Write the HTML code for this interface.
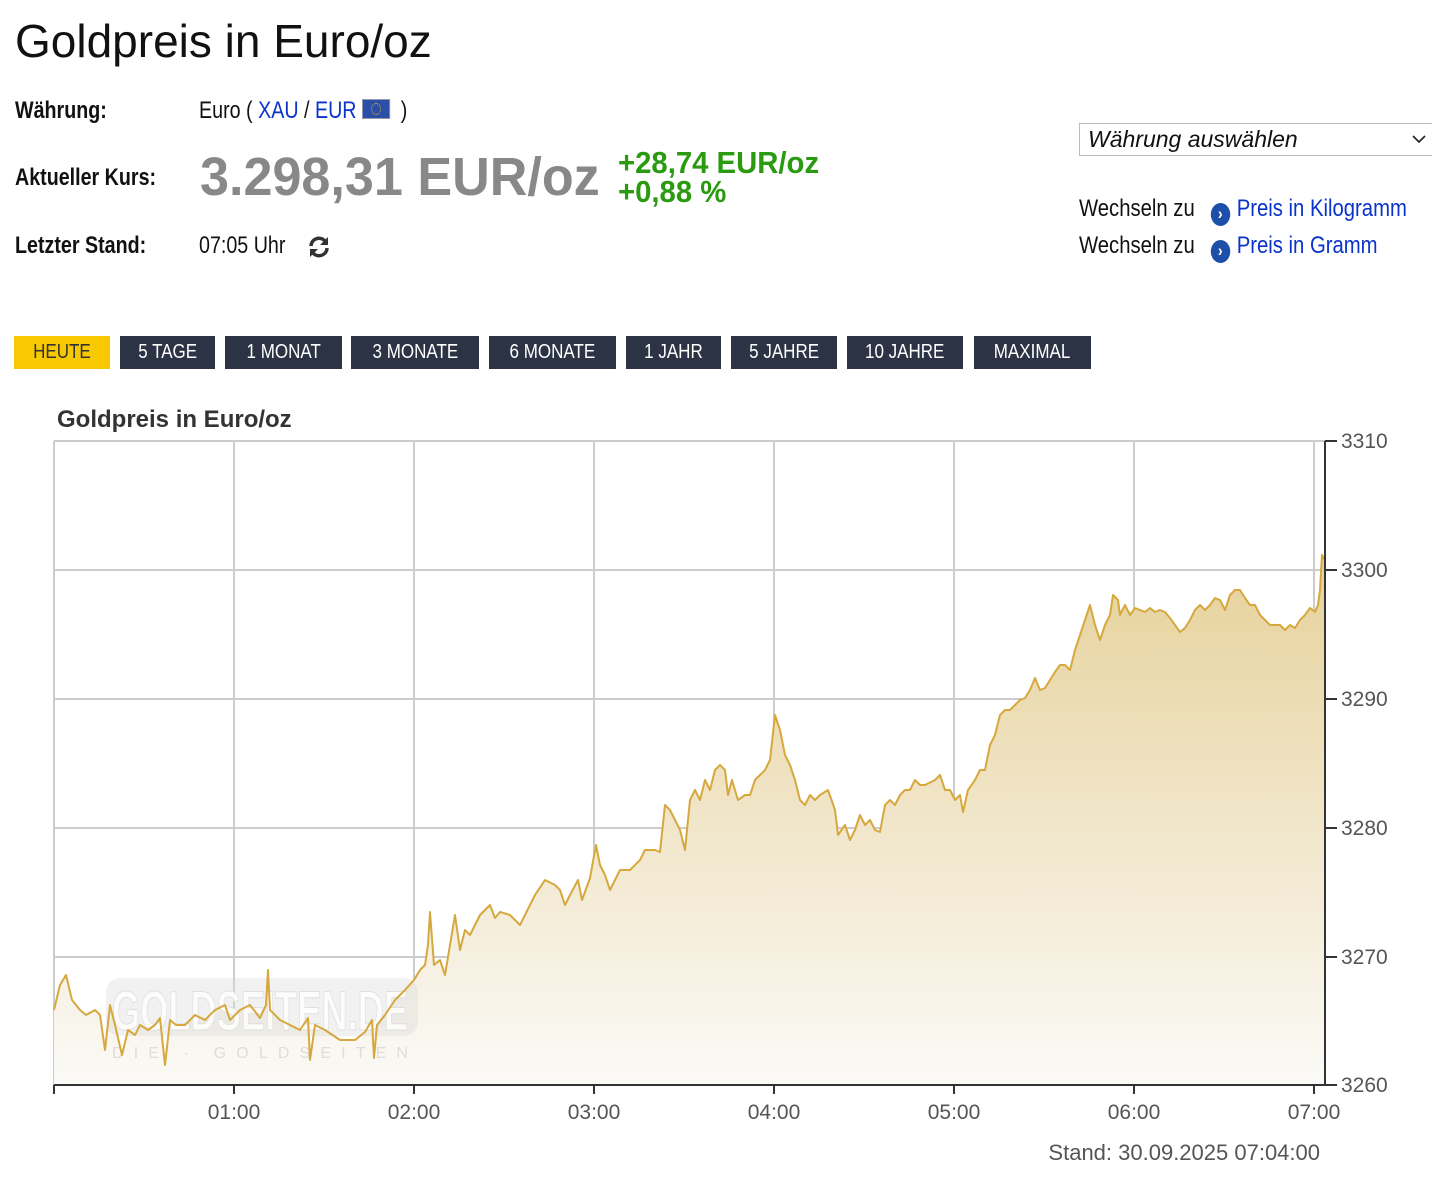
<!DOCTYPE html>
<html><head><meta charset="utf-8"><style>
body{margin:0;width:1432px;height:1200px;background:#fff;position:relative;overflow:hidden;font-family:"Liberation Sans",sans-serif;}
.a{position:absolute;white-space:nowrap}
.n{transform:scaleX(.82);transform-origin:0 0}
.l{font-size:24px;font-weight:bold;color:#111}
.v{font-size:24px;color:#111}
.b{color:#0a33cc}
.btn{position:absolute;top:336px;height:33px;line-height:33px;background:#2b3344;color:#fff;font-size:20px;text-align:center}
.btn span{display:inline-block;transform:scaleX(.85)}
.ic{display:inline-block;width:23px;height:23px;border-radius:50%;background:#1d4fa8;color:#fff;font-size:17px;line-height:22px;text-align:center;font-weight:bold;vertical-align:-3px;margin:0 8px 0 12px}
</style></head><body>
<div class="a" style="left:15px;top:14px;font-size:46px;color:#111">Goldpreis in Euro/oz</div>
<div class="a l n" style="left:15px;top:97px">Währung:</div>
<div class="a v n" style="left:199px;top:97px">Euro ( <span class="b">XAU</span> / <span class="b">EUR</span> <span style="display:inline-block;width:32px;height:18px;background:#2b4fa8;vertical-align:-1px;border:1px solid #99a;position:relative"><span style="position:absolute;left:10px;top:3px;width:10px;height:10px;border:1px dotted #e8c030;border-radius:50%"></span></span> &nbsp;)</div>
<div class="a l n" style="left:15px;top:164px">Aktueller Kurs:</div>
<div class="a" style="left:200px;top:146px;font-size:54px;font-weight:bold;color:#888;transform:scaleX(.965);transform-origin:0 0">3.298,31 EUR/oz</div>
<div class="a" style="left:618px;top:148px;font-size:31px;font-weight:bold;color:#2a9a10;line-height:29px;transform:scaleX(.945);transform-origin:0 0">+28,74 EUR/oz<br>+0,88 %</div>
<div class="a l n" style="left:15px;top:232px">Letzter Stand:</div>
<div class="a v n" style="left:199px;top:232px">07:05 Uhr</div>
<svg class="a" style="left:307px;top:235px" width="24" height="24" viewBox="0 0 24 24"><path d="M4 11a8 8 0 0 1 14-5M20 13a8 8 0 0 1-14 5" stroke="#333" stroke-width="3.5" fill="none"/><path d="M21 2v8h-8zM3 22v-8h8z" fill="#333"/></svg>
<div class="a" style="left:1079px;top:123px;width:353px;height:33px;border:1px solid #bbb;border-right:none;font-style:italic;font-size:23px;line-height:31px;color:#111;padding-left:8px;box-sizing:border-box">Währung auswählen<svg style="position:absolute;right:6px;top:11px" width="14" height="9"><path d="M1 1l6 6 6-6" stroke="#222" stroke-width="1.6" fill="none"/></svg></div>
<div class="a v" style="left:1079px;top:195px;transform:scaleX(.845);transform-origin:0 0">Wechseln zu <span class="ic">›</span><span class="b">Preis in Kilogramm</span></div>
<div class="a v" style="left:1079px;top:232px;transform:scaleX(.845);transform-origin:0 0">Wechseln zu <span class="ic">›</span><span class="b">Preis in Gramm</span></div>
<div class="btn" style="left:14px;width:96px;background:#f8c800;color:#333"><span>HEUTE</span></div>
<div class="btn" style="left:120px;width:95px"><span>5 TAGE</span></div>
<div class="btn" style="left:225px;width:117px"><span>1 MONAT</span></div>
<div class="btn" style="left:351px;width:128px"><span>3 MONATE</span></div>
<div class="btn" style="left:489px;width:127px"><span>6 MONATE</span></div>
<div class="btn" style="left:626px;width:95px"><span>1 JAHR</span></div>
<div class="btn" style="left:731px;width:106px"><span>5 JAHRE</span></div>
<div class="btn" style="left:847px;width:116px"><span>10 JAHRE</span></div>
<div class="btn" style="left:974px;width:117px"><span>MAXIMAL</span></div>
<div class="a" style="left:57px;top:406px;font-size:24px;font-weight:bold;color:#333">Goldpreis in Euro/oz</div>
<svg class="a" style="left:0;top:0" width="1432" height="1200">
<defs><linearGradient id="gr" x1="0" y1="550" x2="0" y2="1085" gradientUnits="userSpaceOnUse"><stop offset="0" stop-color="#e6d19a"/><stop offset="1" stop-color="#fbfaf7"/></linearGradient></defs>
<g stroke="#ccc" stroke-width="2" fill="none">
<path d="M54 441H1325M54 570H1325M54 699H1325M54 828H1325M54 957H1325"/>
<path d="M54 441V1085M234 441V1085M414 441V1085M594 441V1085M774 441V1085M954 441V1085M1134 441V1085M1314 441V1085"/>
</g>
<polygon fill="url(#gr)" points="54,1085 54,1010 60,985 66,975 72,1000 80,1010 86,1015 95,1010 100,1015 105,1050 110,1005 115,1025 122,1055 128,1030 135,1035 140,1025 148,1030 155,1025 160,1018 165,1065 170,1020 176,1025 185,1025 195,1015 205,1020 215,1010 225,1005 230,1020 240,1010 250,1005 260,1018 266,1005 268,970 270,1010 280,1020 290,1025 300,1030 308,1018 310,1060 315,1025 325,1030 340,1040 355,1040 365,1032 372,1020 374,1058 377,1025 385,1015 395,1000 405,990 414,980 420,970 425,965 428,945 430,912 434,965 440,960 445,975 450,945 455,915 460,950 465,930 470,935 480,915 490,905 495,918 500,912 510,915 520,925 530,905 535,895 545,880 555,885 560,890 565,905 570,895 578,880 582,900 590,878 596,845 600,865 605,875 610,890 620,870 630,870 640,860 645,850 655,850 660,852 665,805 670,810 680,830 685,850 690,800 695,790 700,800 705,780 710,790 715,770 720,765 725,770 728,795 732,780 738,800 745,795 750,795 755,780 760,775 765,770 770,760 775,715 780,730 785,755 790,765 795,780 800,800 805,805 810,795 815,800 820,795 828,790 835,810 838,835 845,825 850,840 855,830 860,815 865,825 870,820 875,830 880,832 885,805 890,800 895,805 900,795 905,790 910,790 915,780 920,785 925,785 935,780 940,775 945,790 950,790 955,800 960,795 963,812 968,790 975,780 980,770 985,770 990,745 995,735 1000,715 1005,710 1010,710 1015,705 1020,700 1025,698 1030,690 1035,678 1040,690 1045,688 1050,680 1055,672 1060,665 1065,665 1070,670 1075,650 1080,635 1085,620 1090,605 1095,625 1100,640 1105,625 1110,615 1113,595 1118,600 1120,615 1125,605 1130,615 1135,608 1140,610 1145,612 1150,608 1155,612 1160,610 1165,612 1170,618 1175,625 1180,632 1185,628 1190,620 1195,610 1200,605 1205,610 1210,605 1215,598 1220,600 1225,610 1230,595 1235,590 1240,590 1245,598 1250,605 1255,605 1260,615 1265,620 1270,625 1280,625 1285,630 1290,625 1295,628 1300,620 1305,615 1310,608 1315,612 1318,605 1320,590 1322,555 1325,560 1325,1085"/>
<rect x="106" y="978" width="312" height="58" rx="14" fill="#d8d8d8" opacity=".35"/>
<text x="112" y="1030" font-family="Liberation Sans" font-weight="bold" font-size="56" fill="#fff" stroke="#ddd" stroke-width="1" opacity=".85" textLength="296" lengthAdjust="spacingAndGlyphs">GOLDSEITEN.DE</text>
<text x="112" y="1058" font-family="Liberation Sans" font-size="16" fill="#ddd" textLength="296" lengthAdjust="spacing">DIE · GOLDSEITEN</text>
<polyline fill="none" stroke="#d6a83e" stroke-width="2" stroke-linejoin="round" points="54,1010 60,985 66,975 72,1000 80,1010 86,1015 95,1010 100,1015 105,1050 110,1005 115,1025 122,1055 128,1030 135,1035 140,1025 148,1030 155,1025 160,1018 165,1065 170,1020 176,1025 185,1025 195,1015 205,1020 215,1010 225,1005 230,1020 240,1010 250,1005 260,1018 266,1005 268,970 270,1010 280,1020 290,1025 300,1030 308,1018 310,1060 315,1025 325,1030 340,1040 355,1040 365,1032 372,1020 374,1058 377,1025 385,1015 395,1000 405,990 414,980 420,970 425,965 428,945 430,912 434,965 440,960 445,975 450,945 455,915 460,950 465,930 470,935 480,915 490,905 495,918 500,912 510,915 520,925 530,905 535,895 545,880 555,885 560,890 565,905 570,895 578,880 582,900 590,878 596,845 600,865 605,875 610,890 620,870 630,870 640,860 645,850 655,850 660,852 665,805 670,810 680,830 685,850 690,800 695,790 700,800 705,780 710,790 715,770 720,765 725,770 728,795 732,780 738,800 745,795 750,795 755,780 760,775 765,770 770,760 775,715 780,730 785,755 790,765 795,780 800,800 805,805 810,795 815,800 820,795 828,790 835,810 838,835 845,825 850,840 855,830 860,815 865,825 870,820 875,830 880,832 885,805 890,800 895,805 900,795 905,790 910,790 915,780 920,785 925,785 935,780 940,775 945,790 950,790 955,800 960,795 963,812 968,790 975,780 980,770 985,770 990,745 995,735 1000,715 1005,710 1010,710 1015,705 1020,700 1025,698 1030,690 1035,678 1040,690 1045,688 1050,680 1055,672 1060,665 1065,665 1070,670 1075,650 1080,635 1085,620 1090,605 1095,625 1100,640 1105,625 1110,615 1113,595 1118,600 1120,615 1125,605 1130,615 1135,608 1140,610 1145,612 1150,608 1155,612 1160,610 1165,612 1170,618 1175,625 1180,632 1185,628 1190,620 1195,610 1200,605 1205,610 1210,605 1215,598 1220,600 1225,610 1230,595 1235,590 1240,590 1245,598 1250,605 1255,605 1260,615 1265,620 1270,625 1280,625 1285,630 1290,625 1295,628 1300,620 1305,615 1310,608 1315,612 1318,605 1320,590 1322,555 1325,560"/>
<g stroke="#333" stroke-width="2" fill="none">
<path d="M54 1085H1325M1325 441V1085"/>
<path d="M54 1085v9M234 1085v9M414 1085v9M594 1085v9M774 1085v9M954 1085v9M1134 1085v9M1314 1085v9"/>
<path d="M1325 441h12M1325 570h12M1325 699h12M1325 828h12M1325 957h12M1325 1085h12"/>
</g>
<g font-family="Liberation Sans" font-size="21" fill="#555">
<text x="1341" y="448">3310</text><text x="1341" y="577">3300</text><text x="1341" y="706">3290</text><text x="1341" y="835">3280</text><text x="1341" y="964">3270</text><text x="1341" y="1092">3260</text>
<g text-anchor="middle"><text x="234" y="1119">01:00</text><text x="414" y="1119">02:00</text><text x="594" y="1119">03:00</text><text x="774" y="1119">04:00</text><text x="954" y="1119">05:00</text><text x="1134" y="1119">06:00</text><text x="1314" y="1119">07:00</text></g>
<text x="1320" y="1160" text-anchor="end" font-size="22">Stand: 30.09.2025 07:04:00</text>
</g>
</svg>
</body></html>
